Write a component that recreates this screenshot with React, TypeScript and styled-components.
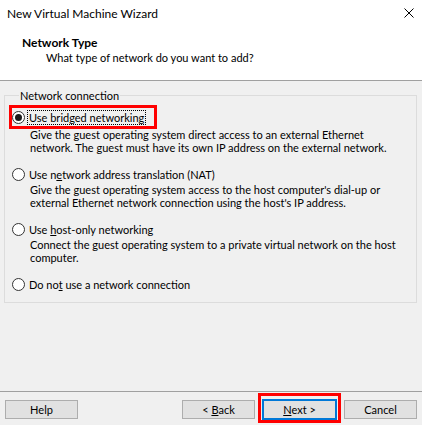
import React from "react";
import styled, { createGlobalStyle } from "styled-components";

const FONT = `Lato, "Noto Sans", sans-serif`;

const Global = createGlobalStyle`
  html, body { margin: 0; padding: 0; background: #f0f0f0; }
  body { font-family: ${FONT}; font-size: 11px; color: #000; }
  * { box-sizing: border-box; }
`;

const Window = styled.div`
  width: 422px;
  height: 425px;
  display: flex;
  flex-direction: column;
  background: #f0f0f0;
  overflow: hidden;
`;

const TitleBar = styled.div`
  height: 26px;
  display: flex;
  align-items: center;
  justify-content: space-between;
  background: #fff;
  padding: 0 8px 0 7px;
  font-size: 12px;
`;

const CloseBtn = styled.div`
  width: 10px;
  height: 10px;
  display: flex;
`;

const Header = styled.div`
  height: 55px;
  background: #fff;
  border-bottom: 1px solid #a0a0a0;
  padding: 10px 0 0 22px;
  line-height: 13px;
`;

const HeaderTitle = styled.div`
  font-weight: bold;
  font-size: 12px;
`;

const HeaderSub = styled.div`
  margin-top: 2px;
  padding-left: 24px;
`;

const Content = styled.div`
  flex: 1;
  padding: 8px 5px 0 4px;
`;

const Group = styled.fieldset`
  margin: 0;
  border: 1px solid #dcdcdc;
  padding: 9px 0 11px 7px;
  display: flex;
  flex-direction: column;
  gap: 14px;
  min-width: 0;
`;

const Legend = styled.legend`
  margin-left: 7px;
  padding: 0 1px;
  line-height: 13px;
`;

const Option = styled.div`
  display: flex;
  flex-direction: column;
`;

const RadioRow = styled.div`
  position: relative;
  display: flex;
  align-items: center;
  height: 13px;
  line-height: 13px;
  gap: 3px;
`;

const RadioCircle = styled.span<{ $checked?: boolean }>`
  width: 13px;
  height: 13px;
  border-radius: 50%;
  border: 1px solid #333;
  background: #fff;
  display: flex;
  align-items: center;
  justify-content: center;
  flex: none;
  &::after {
    content: "";
    width: 7px;
    height: 7px;
    border-radius: 50%;
    background: ${(p) => (p.$checked ? "#1a1a1a" : "transparent")};
  }
`;

const Label = styled.span<{ $focus?: boolean }>`
  white-space: nowrap;
  outline: ${(p) => (p.$focus ? "1px dotted #000" : "none")};
  outline-offset: 0px;
  padding: 0 1px;
`;

const Desc = styled.div<{ $top?: number }>`
  margin-top: ${(p) => p.$top ?? 2}px;
  padding-left: 18px;
  line-height: 13px;
  white-space: nowrap;
`;

const Highlight = styled.div<{ $l: number; $t: number; $w: number; $h: number }>`
  position: absolute;
  left: ${(p) => p.$l}px;
  top: ${(p) => p.$t}px;
  width: ${(p) => p.$w}px;
  height: ${(p) => p.$h}px;
  border: 3px solid #ff0000;
  pointer-events: none;
`;

const Footer = styled.div`
  border-top: 1px solid #a0a0a0;
  height: 34px;
  padding: 8px 5px 0 5px;
  display: flex;
  align-items: flex-start;
`;

const Spacer = styled.div`
  flex: 1;
`;

const ButtonWrap = styled.div`
  position: relative;
  display: flex;
`;

const Button = styled.div<{ $default?: boolean }>`
  width: 73px;
  height: 19px;
  background: #e1e1e1;
  border: 1px solid ${(p) => (p.$default ? "#0078d7" : "#adadad")};
  box-shadow: ${(p) => (p.$default ? "0 0 0 1px #0078d7" : "none")};
  display: flex;
  align-items: center;
  justify-content: center;
  line-height: 13px;
  white-space: pre;
`;

const Gap = styled.div<{ $w: number }>`
  width: ${(p) => p.$w}px;
`;

const U = styled.span`
  text-decoration: underline;
  text-underline-offset: 1px;
`;

export default function App() {
  return (
    <>
      <Global />
      <Window>
        <TitleBar>
          <span>New Virtual Machine Wizard</span>
          <CloseBtn>
            <svg width="10" height="10" viewBox="0 0 10 10">
              <path d="M0.5 0.5 L9.5 9.5 M9.5 0.5 L0.5 9.5" stroke="#000" strokeWidth="1" />
            </svg>
          </CloseBtn>
        </TitleBar>
        <Header>
          <HeaderTitle>Network Type</HeaderTitle>
          <HeaderSub>What type of network do you want to add?</HeaderSub>
        </Header>
        <Content>
          <Group>
            <Legend>Network connection</Legend>
            <Option>
              <RadioRow>
                <RadioCircle $checked />
                <Label $focus>Use bridged networking</Label>
                <Highlight $l={-3} $t={-6} $w={148} $h={24} />
              </RadioRow>
              <Desc $top={4}>
                Give the guest operating system direct access to an external Ethernet
                <br />
                network. The guest must have its own IP address on the external network.
              </Desc>
            </Option>
            <Option>
              <RadioRow>
                <RadioCircle />
                <Label>
                  Use n<U>e</U>twork address translation (NAT)
                </Label>
              </RadioRow>
              <Desc>
                Give the guest operating system access to the host computer's dial-up or
                <br />
                external Ethernet network connection using the host's IP address.
              </Desc>
            </Option>
            <Option>
              <RadioRow>
                <RadioCircle />
                <Label>
                  Use <U>h</U>ost-only networking
                </Label>
              </RadioRow>
              <Desc>
                Connect the guest operating system to a private virtual network on the host
                <br />
                computer.
              </Desc>
            </Option>
            <Option>
              <RadioRow>
                <RadioCircle />
                <Label>
                  Do no<U>t</U> use a network connection
                </Label>
              </RadioRow>
            </Option>
          </Group>
        </Content>
        <Footer>
          <Button>
            <span>Help</span>
          </Button>
          <Spacer />
          <Button>
            <span>
              &lt; <U>B</U>ack
            </span>
          </Button>
          <Gap $w={8} />
          <ButtonWrap>
            <Button $default>
              <span>
                <U>N</U>ext &gt;
              </span>
            </Button>
            <Highlight $l={-5} $t={-7} $w={83} $h={30} />
          </ButtonWrap>
          <Gap $w={8} />
          <Button>
            <span>Cancel</span>
          </Button>
        </Footer>
      </Window>
    </>
  );
}
